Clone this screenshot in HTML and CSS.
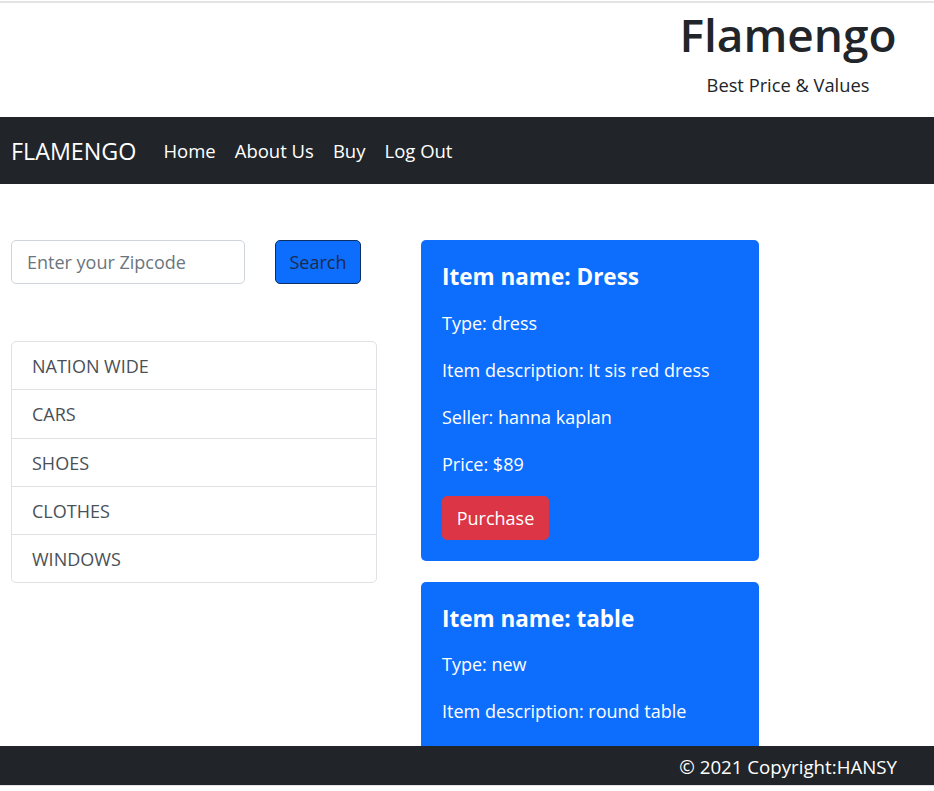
FILE: index.html
```html
<!DOCTYPE html>
<html lang="en">
<head>
<meta charset="utf-8">
<title>Flamengo</title>
<link rel="stylesheet" href="styles.css">
</head>
<body>
<div class="page">
  <header class="top-header">
    <div class="brand-block">
      <h1 class="site-title">Flamengo</h1>
      <p class="site-tagline">Best Price &amp; Values</p>
    </div>
  </header>

  <nav class="navbar">
    <a class="navbar-brand" href="#">FLAMENGO</a>
    <ul class="nav-links">
      <li><a href="#">Home</a></li>
      <li><a href="#">About Us</a></li>
      <li><a href="#">Buy</a></li>
      <li><a href="#">Log Out</a></li>
    </ul>
  </nav>

  <main class="content">
    <aside class="sidebar">
      <form class="search-row">
        <input class="zip-input" type="text" placeholder="Enter your Zipcode">
        <button class="search-btn" type="button">Search</button>
      </form>
      <ul class="list-group">
        <li class="list-item">NATION WIDE</li>
        <li class="list-item">CARS</li>
        <li class="list-item">SHOES</li>
        <li class="list-item">CLOTHES</li>
        <li class="list-item">WINDOWS</li>
      </ul>
    </aside>

    <section class="items">
      <article class="item-card">
        <h2 class="item-title">Item name: Dress</h2>
        <p class="item-text">Type: dress</p>
        <p class="item-text">Item description: It sis red dress</p>
        <p class="item-text">Seller: hanna kaplan</p>
        <p class="item-text">Price: $89</p>
        <button class="purchase-btn" type="button">Purchase</button>
      </article>
      <article class="item-card item-card-tall">
        <h2 class="item-title">Item name: table</h2>
        <p class="item-text">Type: new</p>
        <p class="item-text">Item description: round table</p>
      </article>
    </section>
  </main>

  <footer class="footer-wrap">
    <div class="footer-bar">© 2021 Copyright:HANSY</div>
    <div class="footer-edge"></div>
  </footer>
</div>
</body>
</html>
```

FILE: styles.css
```css
* { box-sizing: border-box; }

html, body {
  margin: 0;
  padding: 0;
  background: #fff;
}

body {
  font-family: "Open Sans", "Noto Sans", "Liberation Sans", sans-serif;
  font-size: 18px;
  color: #212529;
}

.page {
  border-top: 2px solid #e3e3e3;
  margin-top: 1px;
}

.top-header {
  display: flex;
  justify-content: flex-end;
  height: 114px;
}

.brand-block {
  width: 292px;
  text-align: center;
  padding-top: 3px;
}

.site-title {
  margin: 0;
  font-size: 46px;
  font-weight: 600;
  line-height: 56px;
  letter-spacing: 0;
}

.site-tagline {
  margin: 10px 0 0;
  font-size: 18.3px;
  line-height: 25px;
}

.navbar {
  display: flex;
  align-items: center;
  height: 67px;
  background: #212529;
  padding: 0 11px;
}

.navbar-brand {
  color: #fff;
  text-decoration: none;
  font-size: 23.3px;
  line-height: 30px;
  margin-right: 27px;
}

.nav-links {
  display: flex;
  list-style: none;
  margin: 0;
  padding: 0;
  gap: 19px;
}

.nav-links a {
  color: #fff;
  text-decoration: none;
  font-size: 18.5px;
  line-height: 27px;
}

.content {
  display: grid;
  grid-template-columns: 366px 338px;
  column-gap: 44px;
  padding: 56px 0 80px 11px;
  align-items: start;
}

.search-row {
  display: flex;
  gap: 30px;
  margin: 0;
}

.zip-input {
  width: 234px;
  height: 44px;
  border: 1px solid #ced4da;
  border-radius: 5px;
  padding: 0 15px;
  font-family: inherit;
  font-size: 18px;
  color: #212529;
}

.zip-input::placeholder { color: #6c757d; }

.search-btn {
  width: 86px;
  height: 44px;
  background: #0d6efd;
  border: 1px solid #0b2e63;
  border-radius: 5px;
  color: #1b2a4a;
  font-family: inherit;
  font-size: 18px;
}

.list-group {
  list-style: none;
  margin: 57px 0 0;
  padding: 0;
  border: 1px solid #dfe1e4;
  border-radius: 5px;
}

.list-item {
  padding: 11px 20px 9.3px;
  line-height: 27px;
  font-size: 18px;
  color: #495057;
  border-top: 1px solid #dfe1e4;
}

.list-item:first-child { border-top: 0; }

.items {
  display: flex;
  flex-direction: column;
  gap: 21px;
}

.item-card {
  background: #0d6efd;
  color: #fff;
  border-radius: 5px;
  padding: 22px 21px 21px;
}

.item-card-tall {
  min-height: 240px;
}

.item-title {
  margin: 0 0 17.5px;
  font-size: 22.5px;
  font-weight: 700;
  line-height: 30px;
}

.item-text {
  margin: 0 0 20px;
  font-size: 18px;
  line-height: 27px;
}

.item-text:last-of-type { margin-bottom: 18px; }

.purchase-btn {
  display: block;
  width: 107px;
  height: 44px;
  background: #dc3545;
  border: 0;
  border-radius: 5px;
  color: #fff;
  font-family: inherit;
  font-size: 18px;
}

.footer-wrap {
  position: fixed;
  left: 0;
  right: 0;
  bottom: 0;
}

.footer-bar {
  height: 39px;
  background: #212529;
  color: #fff;
  text-align: right;
  padding-right: 37px;
  line-height: 41px;
  font-size: 18.7px;
}

.footer-edge {
  height: 6px;
  background: #fff;
  border-top: 1px solid #e3e3e3;
}
```
